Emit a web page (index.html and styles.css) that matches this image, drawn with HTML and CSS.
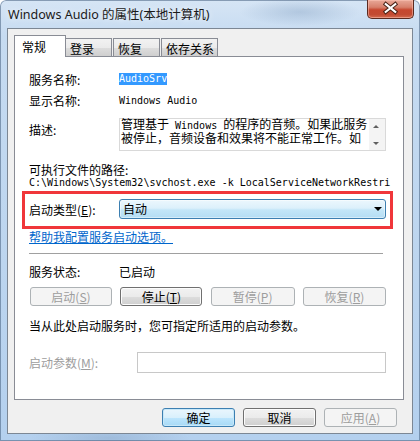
FILE: index.html
```html
<!DOCTYPE html>
<html lang="zh-CN">
<head>
<meta charset="utf-8">
<title>Windows Audio 的属性(本地计算机)</title>
<link rel="stylesheet" href="styles.css">
</head>
<body>
<div class="window">
  <div class="titlebar">
    <span class="title">Windows Audio 的属性(本地计算机)</span>
    <div class="close">
      <svg width="47" height="19" viewBox="0 0 47 19">
        <path d="M18.5 5 L28.5 13 M28.5 5 L18.5 13" stroke="#4a2418" stroke-width="4.2" stroke-linecap="square"/>
        <path d="M18.5 5 L28.5 13 M28.5 5 L18.5 13" stroke="#ffffff" stroke-width="2.2" stroke-linecap="square"/>
      </svg>
    </div>
  </div>
  <div class="client">
    <div class="tabs">
      <div class="tab active">常规</div>
      <div class="tab t-login">登录</div>
      <div class="tab t-recover">恢复</div>
      <div class="tab t-deps">依存关系</div>
    </div>
    <div class="panel">
      <div class="row r-name">
        <span class="label">服务名称:</span>
        <span class="mono sel">AudioSrv</span>
      </div>
      <div class="row r-display">
        <span class="label">显示名称:</span>
        <span class="mono">Windows Audio</span>
      </div>
      <div class="row r-desc">
        <span class="label desc-label">描述:</span>
        <div class="desc-box">
          <div class="desc-text">
            <div class="line">管理基于<span class="mono"> Windows </span>的程序的音频。如果此服务</div>
            <div class="line">被停止，音频设备和效果将不能正常工作。如</div>
          </div>
          <div class="vscroll">
            <span class="arr up"></span>
            <span class="arr down"></span>
          </div>
        </div>
      </div>
      <div class="row r-pathlabel">可执行文件的路径:</div>
      <div class="row r-path mono">C:\Windows\System32\svchost.exe -k LocalServiceNetworkRestri</div>
      <div class="redbox">
        <span class="label">启动类型(<u>E</u>):</span>
        <div class="combo">
          <span class="combo-text">自动</span>
          <span class="combo-arrow"></span>
        </div>
      </div>
      <div class="row r-link"><span class="link">帮助我配置服务启动选项。</span></div>
      <div class="sep"></div>
      <div class="row r-status">
        <span class="label">服务状态:</span>
        <span>已启动</span>
      </div>
      <div class="svc-buttons">
        <div class="btn disabled b-start">启动(<u>S</u>)</div>
        <div class="btn b-stop">停止(<u>T</u>)</div>
        <div class="btn disabled b-pause">暂停(<u>P</u>)</div>
        <div class="btn disabled b-resume">恢复(<u>R</u>)</div>
      </div>
      <div class="row r-hint">当从此处启动服务时，您可指定所适用的启动参数。</div>
      <div class="row r-param">
        <span class="label param-label">启动参数(<u>M</u>):</span>
        <div class="param-input"></div>
      </div>
    </div>
    <div class="dlg-buttons">
      <div class="btn default">确定</div>
      <div class="btn">取消</div>
      <div class="btn disabled">应用(<u>A</u>)</div>
    </div>
  </div>
</div>
</body>
</html>
```

FILE: styles.css
```css
html, body {
  margin: 0;
  padding: 0;
}
body {
  width: 420px;
  height: 441px;
  overflow: hidden;
  font-family: "Noto Sans CJK SC", "Noto Sans", sans-serif;
  font-size: 12px;
  color: #000;
}
.window {
  width: 420px;
  height: 441px;
  box-sizing: border-box;
  padding-bottom: 7px;
  display: flex;
  flex-direction: column;
  background:
    radial-gradient(ellipse 60px 14px at 300px 12px, rgba(120,150,185,0.35), transparent),
    radial-gradient(ellipse 80px 12px at 110px 438px, rgba(120,150,185,0.35), transparent),
    linear-gradient(to bottom, #d6e5f5 0%, #c6dbf1 8%, #bcd5ef 60%, #b4d0ee 100%);
  box-shadow: inset 0 0 0 1px rgba(70,95,125,0.55);
  border-radius: 6px 6px 0 0;
}
.titlebar {
  height: 28px;
  display: flex;
  align-items: flex-start;
  flex: none;
}
.title {
  padding: 6px 0 0 8px;
  line-height: 18px;
  font-family: "Noto Sans", "Noto Sans CJK SC", sans-serif;
  font-size: 12.5px;
  color: #1a1a1a;
  text-shadow: 0 0 6px rgba(255,255,255,0.9);
  white-space: nowrap;
}
.close {
  margin-left: auto;
  margin-right: 6px;
  width: 47px;
  height: 19px;
  box-sizing: border-box;
  border: 1px solid #5b2a20;
  border-top: none;
  border-radius: 0 0 5px 5px;
  background: linear-gradient(to bottom, #e8a898 0%, #d7806c 40%, #c6472f 55%, #c24a32 80%, #d36a4e 100%);
  box-shadow: inset 0 0 0 1px rgba(255,200,185,0.5);
  display: flex;
  overflow: hidden;
}
.close svg {
  display: block;
  margin-top: -1px;
}

.client {
  flex: 1;
  margin: 0 7px;
  box-sizing: border-box;
  border: 1px solid #7c8794;
  background: #f0f0f0;
  padding: 6px 8px 0 6px;
  display: flex;
  flex-direction: column;
}

/* Tabs */
.tabs {
  height: 21px;
  display: flex;
  align-items: flex-end;
  flex: none;
}
.tab {
  box-sizing: border-box;
  border: 1px solid #898c95;
  border-bottom: none;
  height: 18px;
  padding: 3px 0 0 4px;
  line-height: 14px;
  background: linear-gradient(to bottom, #f2f2f2 0%, #ebebeb 50%, #dddddd 51%, #cfcfcf 100%);
  white-space: nowrap;
}
.tab.active {
  position: relative;
  z-index: 1;
  width: 52px;
  height: 22px;
  margin-bottom: -1px;
  padding: 4px 0 0 7px;
  background: #fff;
}
.t-login { width: 47px; margin-left: -1px; }
.t-recover { width: 47px; margin-left: 1px; }
.t-deps { width: 57px; margin-left: 1px; }

.panel {
  box-sizing: border-box;
  height: 344px;
  border: 1px solid #898c95;
  background: #fff;
  display: flex;
  flex-direction: column;
  flex: none;
}
.row {
  display: flex;
  align-items: center;
  margin-left: 14px;
  white-space: nowrap;
}
.label {
  width: 90px;
  flex: none;
}
.mono {
  font-family: "DejaVu Sans Mono", "Liberation Mono", monospace;
  font-size: 10px;
}
.r-name { margin-top: 14px; height: 16px; }
.r-display { margin-top: 5px; height: 16px; }
.sel {
  background: #3399ff;
  color: #fff;
  line-height: 12px;
  padding: 0;
}
.r-desc {
  margin-top: 10px;
  height: 33px;
  align-items: flex-start;
}
.desc-label { padding-top: 5px; line-height: 14px; }
.desc-box {
  width: 267px;
  height: 33px;
  box-sizing: border-box;
  border: 1px solid #d9d9d9;
  display: flex;
}
.desc-text {
  flex: 1;
  padding: 0 0 0 1px;
}
.desc-text .line {
  height: 13.5px;
  line-height: 13.5px;
  font-family: "Liberation Sans", "Noto Sans CJK SC", sans-serif;
  white-space: nowrap;
}
.desc-text .line .mono {
  font-family: "DejaVu Sans Mono", "Liberation Mono", monospace;
}
.vscroll {
  width: 16px;
  background: #f4f4f4;
  position: relative;
  flex: none;
}
.arr {
  position: absolute;
  left: 4px;
  width: 0;
  height: 0;
  border-left: 3px solid transparent;
  border-right: 3px solid transparent;
}
.arr.up { top: 6px; border-bottom: 3px solid #606060; }
.arr.down { top: 23px; border-top: 3px solid #606060; }

.r-pathlabel { margin-top: 10px; height: 16px; }
.r-path {
  height: 12px;
  line-height: 12px;
  display: block;
}

.redbox {
  margin: 2px 0 0 7px;
  width: 371px;
  height: 38px;
  box-sizing: border-box;
  border: 3px solid #f0363a;
  padding: 0 0 2px 4px;
  display: flex;
  align-items: center;
}
.combo {
  width: 267px;
  height: 20px;
  box-sizing: border-box;
  border: 1px solid #3c7fb1;
  border-radius: 3px;
  background: linear-gradient(to bottom, #ecf7fd 0%, #dcf0fb 45%, #c3e6f8 55%, #b4ddf4 100%);
  box-shadow: inset 0 0 0 1px rgba(255,255,255,0.45);
  display: flex;
  align-items: center;
  padding: 0 3px 0 3px;
}
.combo-text { flex: 1; line-height: 16px; font-size: 12px; }
.combo-arrow {
  width: 0;
  height: 0;
  border-left: 4px solid transparent;
  border-right: 4px solid transparent;
  border-top: 4px solid #000;
}

.r-link { height: 14px; margin-top: 0; }
.link { color: #0066cc; text-decoration: underline; }

.sep {
  margin: 10px 0 0 14px;
  width: 354px;
  height: 1px;
  background: #a0a0a0;
  flex: none;
}
.r-status { margin-top: 9px; height: 16px; }

.btn {
  box-sizing: border-box;
  height: 19px;
  border: 1px solid #707070;
  border-radius: 3px;
  background: linear-gradient(to bottom, #f2f2f2 0%, #ebebeb 50%, #dddddd 51%, #cfcfcf 100%);
  box-shadow: inset 0 0 0 1px #fcfcfc;
  display: flex;
  align-items: center;
  justify-content: center;
  line-height: 14px;
  white-space: nowrap;
}
.btn.disabled {
  border-color: #adb2b5;
  background: #f4f4f4;
  box-shadow: none;
  color: #9d9d9d;
}
.btn.default {
  border-color: #3c7fb1;
  background: linear-gradient(to bottom, #eaf6fd 0%, #d9f0fc 50%, #bee6fd 51%, #a7d9f5 100%);
  box-shadow: inset 0 0 0 1px #c8e8f9;
}

.svc-buttons {
  margin: 8px 0 0 15px;
  width: 356px;
  display: flex;
  justify-content: space-between;
}
.b-start { width: 82px; }
.b-stop { width: 82px; }
.b-pause { width: 84px; }
.b-resume { width: 83px; }

.r-hint { margin-top: 12px; height: 14px; }
.r-param { margin-top: 20px; height: 21px; }
.param-label { width: 108px; color: #9d9d9d; }
.param-input {
  width: 249px;
  height: 21px;
  box-sizing: border-box;
  border: 1px solid #c8c8c8;
  background: #fff;
}

.dlg-buttons {
  margin-top: 8px;
  display: flex;
  justify-content: flex-end;
  gap: 8px;
  padding-right: 7px;
}
.dlg-buttons .btn { width: 73px; }
```
